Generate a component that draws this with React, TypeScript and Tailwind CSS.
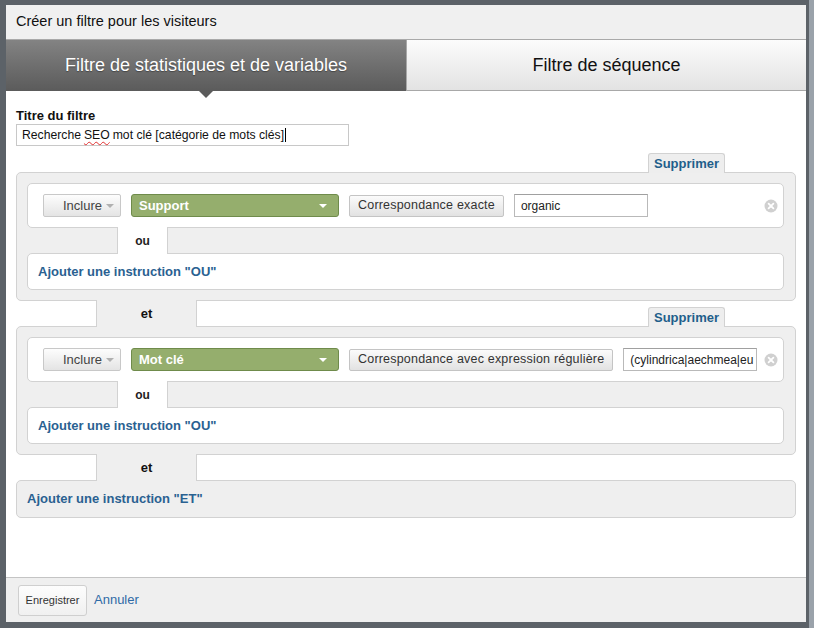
import React from 'react';

const FONT = { fontFamily: '"Liberation Sans", Arial, sans-serif' };

const Caret = ({ color }: { color: string }) => (
  <span
    className="inline-block w-0 h-0 border-x-[4px] border-x-transparent border-t-[4px]"
    style={{ borderTopColor: color }}
  />
);

const CloseIcon = () => (
  <svg width="14" height="14" viewBox="0 0 14 14" className="shrink-0">
    <circle cx="7" cy="7" r="6.5" fill="#d0d0d0" />
    <path d="M4.6 4.6 L9.4 9.4 M9.4 4.6 L4.6 9.4" stroke="#ffffff" strokeWidth="1.8" strokeLinecap="round" />
  </svg>
);

interface RowProps {
  dimension: string;
  match: string;
  value: string;
  inputWidth: string;
}

const ConditionRow: React.FC<RowProps> = ({ dimension, match, value, inputWidth }) => (
  <div className="h-[45px] bg-white border border-[#d2d2d2] rounded-[5px] flex items-center pl-[15px] pr-[4px]">
    <div className="flex items-center gap-[10px]">
      <button className="h-[23px] w-[78px] flex items-center pl-[19px] gap-[4px] rounded-[2px] border border-[#c8c8c8] bg-gradient-to-b from-[#fdfdfd] to-[#e4e4e4] text-[13px] text-[#444]">
        Inclure
        <Caret color="#b0b0b0" />
      </button>
      <button className="h-[23px] w-[208px] flex items-center justify-between pl-[7px] pr-[11px] rounded-[3px] border border-[#6f8b4b] bg-[#95ae6d] text-[13px] font-bold text-white">
        {dimension}
        <Caret color="#ffffff" />
      </button>
      <button className="h-[22px] px-[8px] rounded-[2px] border border-[#c4c4c4] bg-gradient-to-b from-[#fbfbfb] to-[#e2e2e2] text-[12.5px] text-[#333] tracking-[0.2px]">
        {match}
      </button>
      <div
        className={`h-[23px] ${inputWidth} border border-[#b9b9b9] border-t-[#a0a0a0] flex items-center pl-[6px] text-[12px] text-[#222] overflow-hidden whitespace-nowrap`}
      >
        {value}
      </div>
    </div>
    <div className="ml-auto mr-[1px]">
      <CloseIcon />
    </div>
  </div>
);

const OrConnector = () => (
  <div className="h-[25px] flex">
    <div className="ml-[90px] w-[51px] h-[27px] -mt-px relative z-10 bg-white border-x border-[#d2d2d2] flex items-center justify-center text-[12px] font-bold text-[#222]">
      ou
    </div>
  </div>
);

const SupprimerTab = () => (
  <div className="mr-[71px] mb-[-1px] relative z-10 h-[20px] w-[77px] rounded-t-[3px] border border-b-0 border-[#d2d2d2] bg-[#eeeeee] flex items-center justify-center text-[13px] font-bold text-[#1f5f8b]">
    Supprimer
  </div>
);

const EtConnector = ({ withDelete }: { withDelete: boolean }) => (
  <div className="h-[25px] flex items-end">
    <div className="ml-[80px] w-[101px] h-[27px] mb-[-1px] self-start -mt-px relative z-10 bg-[#efefef] border-x border-[#d2d2d2] flex items-center justify-center text-[13px] font-bold text-[#111]">
      et
    </div>
    {withDelete && <div className="ml-auto"><SupprimerTab /></div>}
  </div>
);

const Group: React.FC<RowProps> = (props) => (
  <div className="rounded-[5px] border border-[#d2d2d2] bg-[#efefef] pt-[10px] pb-[10px] pl-[10px] pr-[11px]">
    <ConditionRow {...props} />
    <OrConnector />
    <div className="h-[37px] bg-white border border-[#d2d2d2] rounded-[5px] flex items-center px-[10px] text-[13px] font-bold text-[#2a6191]">
      Ajouter une instruction "OU"
    </div>
  </div>
);

export default function App() {
  return (
    <div style={FONT} className="w-[814px] h-[628px] bg-[#5c6268] pt-[5px] pl-[6px] flex">
      <div className="w-[800px] h-[617px] bg-white flex flex-col">
        {/* title bar */}
        <div className="h-[35px] shrink-0 bg-[#f0f0f0] border-b border-[#a9a9a9] flex items-center pl-[10px] text-[14.5px] text-[#111]">
          Créer un filtre pour les visiteurs
        </div>

        {/* tabs */}
        <div className="h-[51px] shrink-0 flex">
          <div className="relative w-[400px] bg-gradient-to-b from-[#838383] to-[#5b5b5b] flex items-center justify-center text-[18px] text-white [text-shadow:0_1px_1px_rgba(0,0,0,0.35)]">
            Filtre de statistiques et de variables
            <span className="absolute left-[193px] top-full w-0 h-0 border-x-[7px] border-x-transparent border-t-[7px] border-t-[#5b5b5b]" />
          </div>
          <div className="w-[400px] bg-gradient-to-b from-[#fcfcfc] to-[#e3e3e3] border-l border-b border-[#a8a8a8] flex items-center justify-center text-[18px] text-[#111]">
            Filtre de séquence
          </div>
        </div>

        {/* content */}
        <div className="flex-1 px-[10px] pt-[18px] flex flex-col">
          <div className="text-[13px] font-bold text-[#111] leading-[14px]">Titre du filtre</div>
          <div className="mt-[1px] w-[333px] h-[22px] border border-[#c8c8c8] flex items-center px-[5px] text-[12.2px] text-[#111]">
            Recherche <span className="mx-[3px] underline decoration-wavy decoration-[#e03030] decoration-[1px] underline-offset-[2px]">SEO</span> mot clé [catégorie de mots clés]
            <span className="ml-px inline-block w-px h-[14px] bg-black" />
          </div>

          <div className="mt-[7px] h-[19px] flex items-end justify-end">
            <SupprimerTab />
          </div>
          <Group dimension="Support" match="Correspondance exacte" value="organic" inputWidth="w-[134px]" />
          <EtConnector withDelete />
          <Group
            dimension="Mot clé"
            match="Correspondance avec expression régulière"
            value="(cylindrica|aechmea|eu"
            inputWidth="w-[134px]"
          />
          <EtConnector withDelete={false} />
          <div className="h-[38px] rounded-[5px] border border-[#d2d2d2] bg-[#efefef] flex items-center px-[10px] text-[13px] font-bold text-[#2a6191]">
            Ajouter une instruction "ET"
          </div>
        </div>

        {/* footer */}
        <div className="h-[45px] shrink-0 bg-[#efefef] border-t border-[#c4c4c4] flex items-center pl-[12px] gap-[7px]">
          <button className="h-[31px] w-[69px] rounded-[3px] border border-[#cfcfcf] bg-gradient-to-b from-[#fdfdfd] to-[#f0f0f0] text-[11px] text-[#333]">
            Enregistrer
          </button>
          <span className="text-[13px] text-[#2f6aa6]">Annuler</span>
        </div>
      </div>
      <div className="ml-[3px] mt-[-5px] w-[5px] h-[628px] bg-[#9aa2aa]" />
    </div>
  );
}
